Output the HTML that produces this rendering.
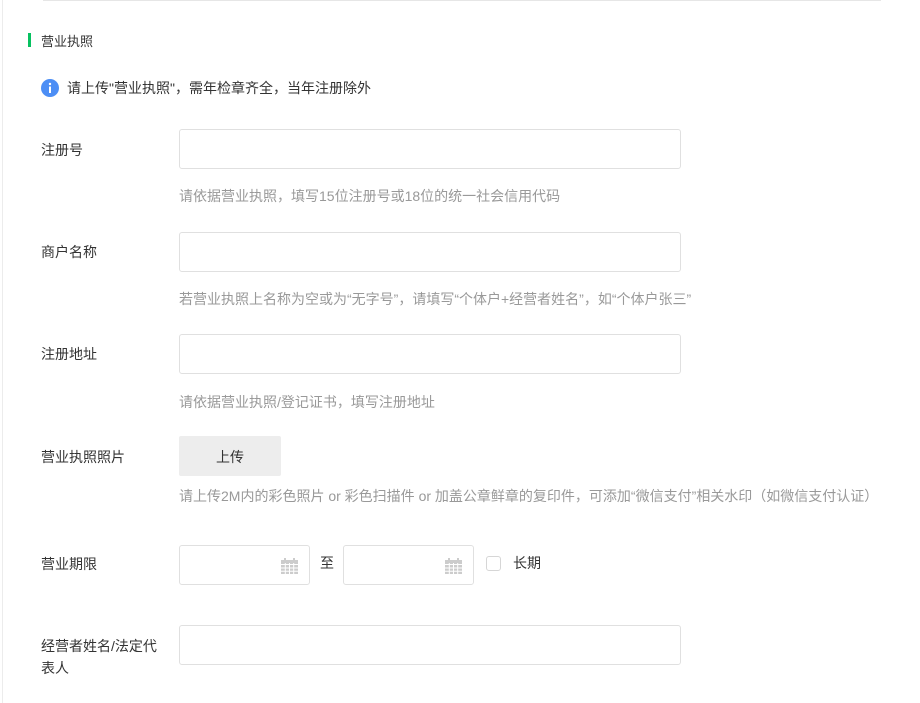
<!DOCTYPE html>
<html><head><meta charset="utf-8"><style>
body{margin:0;width:920px;height:703px;background:#fff;font-family:"Liberation Sans","Noto Sans CJK SC",sans-serif;font-size:14px;color:#333;position:relative;overflow:hidden}
.a{position:absolute;white-space:nowrap}
.inp{position:absolute;border:1px solid #e0e0e0;border-radius:3px;box-sizing:border-box;background:#fff}
.tip{position:absolute;color:#999;font-size:14px;white-space:nowrap}
.cal{position:absolute;right:11px;top:12px;width:17px;height:16px}
</style></head><body>
<div class="a" style="left:2px;top:0;width:1px;height:703px;background:#ececec"></div>
<div class="a" style="left:43px;top:0;width:838px;height:1px;background:#e6e6e6"></div>
<div class="a" style="left:28px;top:33px;width:3px;height:14px;background:#07c160"></div>
<div class="a" style="left:41px;top:31px;font-size:13px">营业执照</div>
<svg class="a" style="left:41px;top:79px" width="18" height="18" viewBox="0 0 18 18"><circle cx="9" cy="9" r="9" fill="#4c8ef5"/><rect x="8" y="7.5" width="2" height="6.5" fill="#fff"/><circle cx="9" cy="5" r="1.2" fill="#fff"/></svg>
<div class="a" style="left:67px;top:78px">请上传"营业执照"，需年检章齐全，当年注册除外</div>

<div class="a" style="left:41px;top:140px">注册号</div>
<div class="inp" style="left:179px;top:129px;width:502px;height:40px"></div>
<div class="tip" style="left:179px;top:186px">请依据营业执照，填写15位注册号或18位的统一社会信用代码</div>

<div class="a" style="left:41px;top:242px">商户名称</div>
<div class="inp" style="left:179px;top:232px;width:502px;height:40px"></div>
<div class="tip" style="left:179px;top:289px">若营业执照上名称为空或为“无字号”，请填写“个体户+经营者姓名”，如“个体户张三”</div>

<div class="a" style="left:41px;top:344px">注册地址</div>
<div class="inp" style="left:179px;top:334px;width:502px;height:40px"></div>
<div class="tip" style="left:179px;top:392px">请依据营业执照/登记证书，填写注册地址</div>

<div class="a" style="left:41px;top:447px">营业执照照片</div>
<div class="a" style="left:179px;top:436px;width:102px;height:40px;background:#ededed;border-radius:2px;text-align:center;line-height:42px;color:#333">上传</div>
<div class="tip" style="left:179px;top:486px">请上传2M内的彩色照片 or 彩色扫描件 or 加盖公章鲜章的复印件，可添加“微信支付”相关水印（如微信支付认证）</div>

<div class="a" style="left:41px;top:554px">营业期限</div>
<div class="inp" style="left:179px;top:545px;width:131px;height:40px"><svg class="cal" viewBox="0 0 17 16"><rect x="0" y="2" width="17" height="14" fill="#ccc"/><rect x="3" y="0" width="2" height="3" fill="#ccc"/><rect x="12" y="0" width="2" height="3" fill="#ccc"/><path d="M0 6.5H17M0 10H17M0 13.3H17M4.3 5V16M8.5 5V16M12.7 5V16" stroke="#fff" stroke-width="1"/></svg></div>
<div class="a" style="left:320px;top:553px">至</div>
<div class="inp" style="left:343px;top:545px;width:131px;height:40px"><svg class="cal" viewBox="0 0 17 16"><rect x="0" y="2" width="17" height="14" fill="#ccc"/><rect x="3" y="0" width="2" height="3" fill="#ccc"/><rect x="12" y="0" width="2" height="3" fill="#ccc"/><path d="M0 6.5H17M0 10H17M0 13.3H17M4.3 5V16M8.5 5V16M12.7 5V16" stroke="#fff" stroke-width="1"/></svg></div>
<div class="a" style="left:486px;top:556px;width:15px;height:15px;border:1px solid #d6d6d6;border-radius:3px;box-sizing:border-box"></div>
<div class="a" style="left:513px;top:553px">长期</div>

<div class="a" style="left:41px;top:635px;line-height:22px">经营者姓名/法定代<br>表人</div>
<div class="inp" style="left:179px;top:625px;width:502px;height:40px"></div>
</body></html>
